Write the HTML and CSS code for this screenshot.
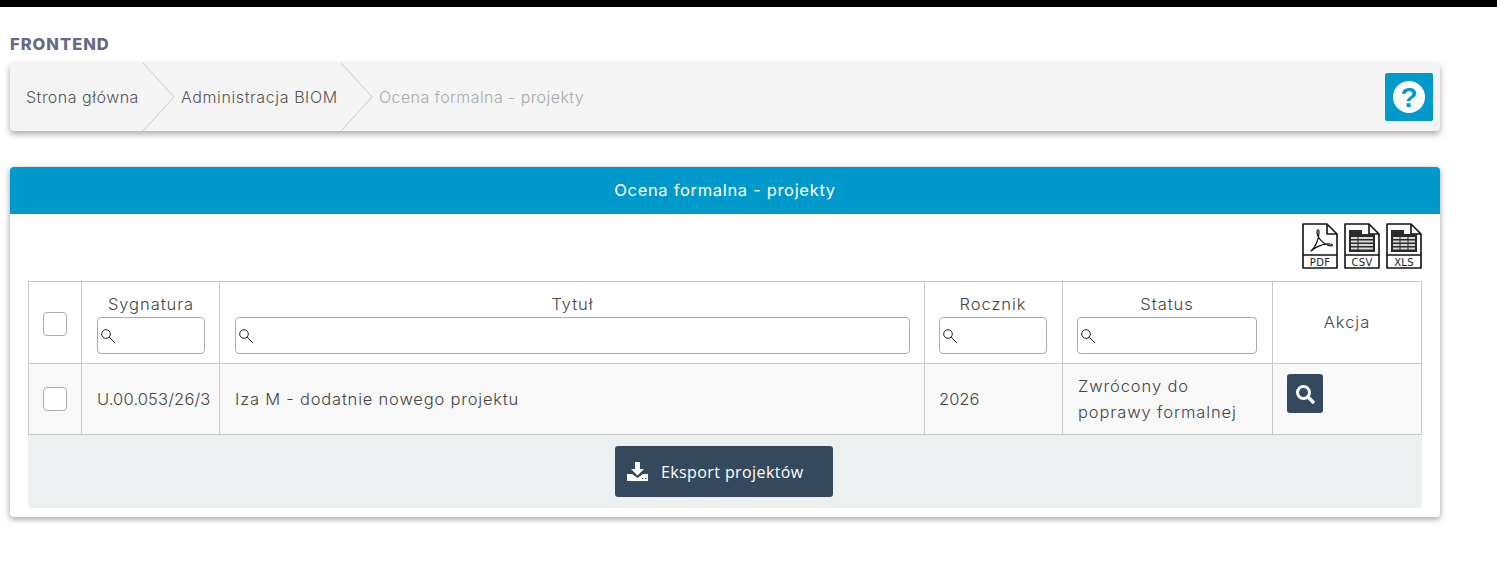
FILE: index.html
```html
<!DOCTYPE html>
<html lang="pl">
<head>
<meta charset="utf-8">
<title>Ocena formalna - projekty</title>
<link rel="stylesheet" href="styles.css">
</head>
<body>
<div class="topbar"></div>
<main class="page">
  <h1 class="app-title">FRONTEND</h1>
  <nav class="crumbs">
    <a class="crumb crumb-first"><span class="sp-a">Strona główna</span><svg class="chev" viewBox="0 0 34 68" preserveAspectRatio="none"><path d="M0 0 L31 34 L0 68" fill="none" stroke="#c9c9c9"/></svg></a>
    <a class="crumb crumb-second"><span class="sp-b">Administracja BIOM</span><svg class="chev" viewBox="0 0 34 68" preserveAspectRatio="none"><path d="M0 0 L31 34 L0 68" fill="none" stroke="#c9c9c9"/></svg></a>
    <span class="crumb crumb-current"><span class="sp-c">Ocena formalna - projekty</span></span>
    <button class="help" aria-label="Pomoc">
      <svg viewBox="0 0 32 32" width="32" height="32"><circle cx="16" cy="16" r="16" fill="#fff"/><text x="16" y="26" class="help-mark">?</text></svg>
    </button>
  </nav>

  <section class="card">
    <header class="card-head">Ocena formalna - projekty</header>
    <div class="card-body">
      <div class="files">
        <svg class="file" viewBox="0 0 36 46"><path class="fo" d="M1 1H25L35 11V45H1Z"/><path class="fo" d="M25 1V11H35M1 32H35"/><path class="fo thin" d="M9 28C14 24 17 15 17 9C17 6 15 6 15 9C15 15 22 22 29 23C31 23 31 21 28 21C20 20 11 26 9 28Z"/><text x="18" y="43" class="file-label">PDF</text></svg>
        <svg class="file" viewBox="0 0 36 46"><path class="fo" d="M1 1H25L35 11V45H1Z"/><path class="fo" d="M25 1V11H35M1 32H35"/><path class="grid" d="M5 7H18V11H31V29H5Z"/><path class="lines" d="M7 15H29M7 18.500H29M7 22H29M7 25.500H29"/><path class="lines-d" d="M14 14V28"/><text x="18" y="43" class="file-label">CSV</text></svg>
        <svg class="file" viewBox="0 0 36 46"><path class="fo" d="M1 1H25L35 11V45H1Z"/><path class="fo" d="M25 1V11H35M1 32H35"/><path class="grid" d="M5 7H18V11H31V29H5Z"/><path class="lines" d="M7 15H29M7 18.500H29M7 22H29M7 25.500H29"/><path class="lines-d" d="M14 14V28M22 14V28"/><text x="18" y="43" class="file-label">XLS</text></svg>
      </div>
      <table class="tbl">
        <colgroup>
          <col class="c-check"><col class="c-sig"><col class="c-title"><col class="c-year"><col class="c-status"><col class="c-action">
        </colgroup>
        <thead>
          <tr>
            <th class="cell-check"><span class="check"></span></th>
            <th class="cell-first">Sygnatura<span class="filter"><svg class="lens" viewBox="0 0 16 16"><circle cx="6" cy="6" r="4.300"/><path d="M9.200 9.200L15 15"/></svg></span></th>
            <th>Tytuł<span class="filter"><svg class="lens" viewBox="0 0 16 16"><circle cx="6" cy="6" r="4.300"/><path d="M9.200 9.200L15 15"/></svg></span></th>
            <th class="cell-tight">Rocznik<span class="filter"><svg class="lens" viewBox="0 0 16 16"><circle cx="6" cy="6" r="4.300"/><path d="M9.200 9.200L15 15"/></svg></span></th>
            <th class="cell-tight">Status<span class="filter"><svg class="lens" viewBox="0 0 16 16"><circle cx="6" cy="6" r="4.300"/><path d="M9.200 9.200L15 15"/></svg></span></th>
            <th class="cell-plain">Akcja</th>
          </tr>
        </thead>
        <tbody>
          <tr>
            <td class="cell-check"><span class="check"></span></td>
            <td class="cell-first sig">U.00.053/26/3</td>
            <td class="name">Iza M - dodatnie nowego projektu</td>
            <td class="cell-tight year">2026</td>
            <td class="status">Zwrócony do poprawy formalnej</td>
            <td class="cell-action"><button class="view" aria-label="Podgląd"><svg viewBox="0 0 20 20" width="20" height="20"><circle cx="8.500" cy="8.500" r="6" fill="none" stroke="#fff" stroke-width="3"/><path d="M13 13L18 18" stroke="#fff" stroke-width="3.400" stroke-linecap="round"/></svg></button></td>
          </tr>
        </tbody>
      </table>
      <div class="export-bar">
        <button class="export">
          <svg viewBox="0 0 21 20" width="21" height="20"><path d="M8 0H13V7H17L10.500 13.500L4 7H8Z" fill="#fff"/><path d="M0 12H5L10.500 16L16 12H21V19H0Z" fill="#fff"/><path d="M15 16.500H16.500M18 16.500H19.500" stroke="#34495e"/></svg>
          <span>Eksport projektów</span>
        </button>
      </div>
    </div>
  </section>
</main>
</body>
</html>
```
FILE: styles.css
```css
* { box-sizing: border-box; }
html, body { margin: 0; padding: 0; background: #fff; }
body { min-height: 100vh; font-family: Inter, "Open Sans", "Liberation Sans", sans-serif; color: #444; font-size: 15px; font-weight: 350; }
.topbar { height: 7px; background: #000; }
.page { width: 1430px; margin-left: 10px; }
.app-title { margin: 0; padding-top: 29px; height: 56px; font-size: 16.500px; line-height: 17px; font-weight: 800; letter-spacing: 1px; color: #676a81; }
.crumbs { display: flex; align-items: center; height: 68px; background: #f4f4f4; border-radius: 4px; box-shadow: 0 3px 6px rgba(0,0,0,.35); padding-right: 7px; }
.crumb { position: relative; display: flex; align-items: center; height: 68px; font-size: 16px; color: #555; white-space: nowrap; }
.sp-a { letter-spacing: .5px; }
.sp-b { letter-spacing: .6px; }
.sp-c { letter-spacing: .42px; }
.crumb-first { width: 133px; padding-left: 16px; }
.crumb-second { width: 198px; padding-left: 38px; }
.crumb-current { flex: 1; padding-left: 38px; color: #aaa; }
.chev { position: absolute; top: 0; right: -34px; width: 34px; height: 68px; }
.help { width: 48px; height: 48px; padding: 0; border: 0; border-radius: 2px; background: #0099cc; display: flex; align-items: center; justify-content: center; }
.help-mark { font-family: "Liberation Sans", sans-serif; font-size: 28px; font-weight: 700; fill: #0099cc; text-anchor: middle; }
.card { margin-top: 36px; border-radius: 4px; box-shadow: 0 2px 6px rgba(0,0,0,.4); background: #fff; }
.card-head { height: 47px; line-height: 47px; background: #0099cc; color: #fff; text-align: center; font-size: 16.500px; font-weight: 400; letter-spacing: .68px; border-radius: 4px 4px 0 0; }
.card-body { padding: 9px 18px 9px; height: 303px; }
.files { display: flex; justify-content: flex-end; gap: 6px; height: 58px; }
.file { width: 36px; height: 46px; display: block; }
.fo { fill: none; stroke: #111; stroke-width: 1.600; stroke-linejoin: round; }
.thin { stroke-width: 1.200; }
.grid { fill: #2b2b2b; }
.lines { stroke: #d8d8d8; stroke-width: 1.800; fill: none; }
.lines-d { stroke: #2b2b2b; stroke-width: 1; fill: none; }
.file-label { font-family: "DejaVu Sans", sans-serif; font-size: 10px; font-weight: 400; fill: #222; text-anchor: middle; letter-spacing: .3px; }
.tbl { width: 1393px; table-layout: fixed; border-collapse: collapse; font-size: 16.500px; letter-spacing: .95px; }
.c-check { width: 53px; } .c-sig { width: 138px; } .c-title { width: 705px; } .c-year { width: 138px; } .c-status { width: 210px; } .c-action { width: 149px; }
.tbl th, .tbl td { border: 1px solid #c8c8c8; }
.tbl th { height: 82px; padding: 12px 14px 9px 15px; font-weight: 350; text-align: center; vertical-align: middle; }
.tbl td { height: 71px; padding: 0 14px 0 15px; background: #f8f8f8; line-height: 25px; vertical-align: middle; }
.tbl .cell-check { padding-left: 14px; padding-right: 0; }
.tbl .cell-first { padding-left: 15px; padding-right: 14px; }
.tbl .cell-tight { padding-left: 14px; padding-right: 15px; }
.tbl .cell-plain { padding: 0 0 2px; }
.tbl .cell-action { vertical-align: top; padding: 10px 0 0 14px; }
.sig { white-space: nowrap; letter-spacing: .15px; }
.name { letter-spacing: .8px; }
.year { letter-spacing: 0; }
.tbl .status { letter-spacing: .9px; line-height: 26px; }
.check { display: block; width: 24px; height: 24px; border: 1px solid #aaa; border-radius: 4px; background: #fff; }
.filter { display: flex; align-items: center; height: 37px; margin-top: 3px; padding-left: 2px; border: 1px solid #aaa; border-radius: 4px; background: #fff; }
.lens { width: 16px; height: 16px; fill: none; stroke: #222; stroke-width: 1; }
.view { display: flex; align-items: center; justify-content: center; width: 36px; height: 39px; padding: 0; border: 0; border-radius: 3px; background: #34495e; }
.export-bar { display: flex; justify-content: center; align-items: center; height: 73px; padding-right: 2px; background: #ecf0f1; border-radius: 0 0 4px 4px; }
.export { display: flex; align-items: center; gap: 13px; width: 218px; height: 51px; padding: 0 12px; border: 0; border-radius: 3px; background: #34495e; color: #fff; font-family: "Open Sans", sans-serif; font-size: 16px; font-weight: 500; letter-spacing: .4px; }
```
